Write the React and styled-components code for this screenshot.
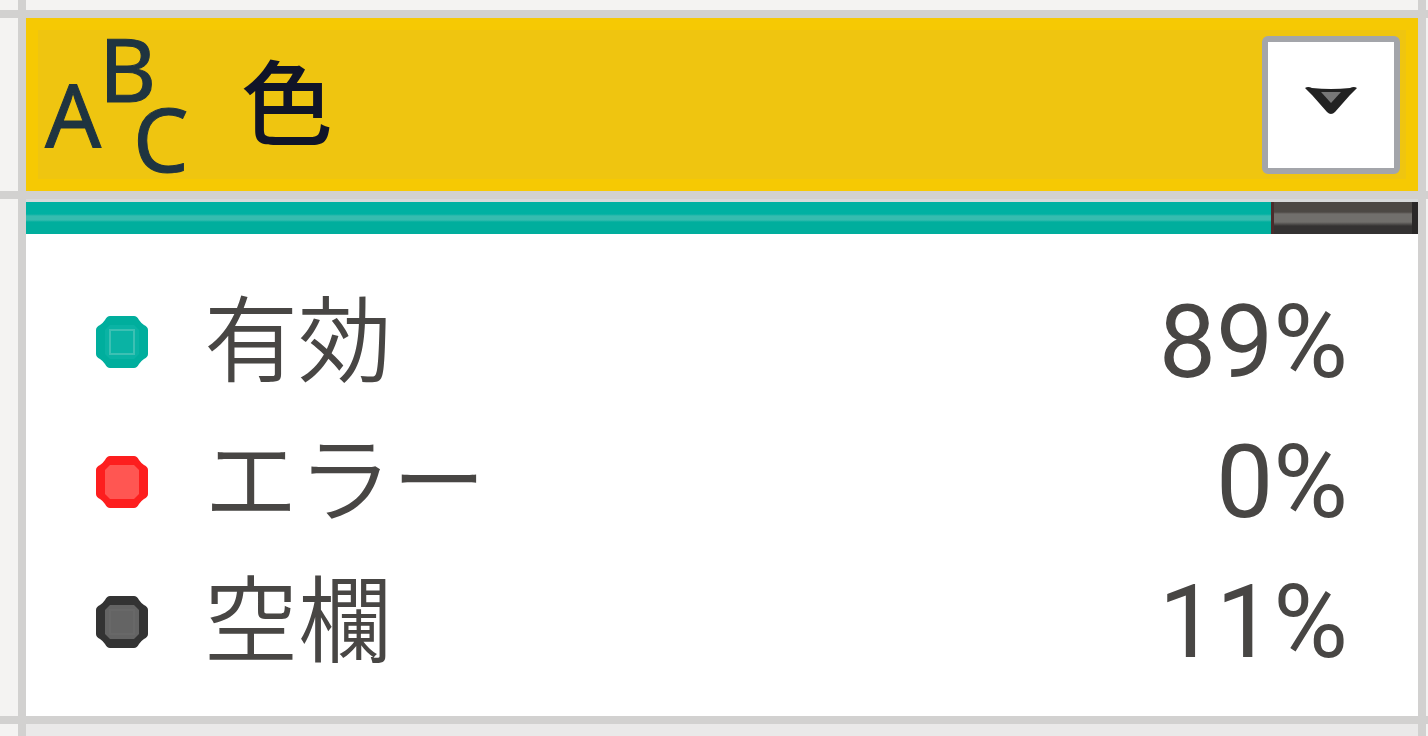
import React from "react";
import styled, { createGlobalStyle } from "styled-components";

const stats = [
  { id: "valid", label: "有効", count: 17, edge: "#00ae9d", core: "#0ab3a4", line: "#3cc0b3" },
  { id: "error", label: "エラー", count: 0, edge: "#fd1e1e", core: "#ff5652", line: "#ff5652" },
  { id: "empty", label: "空欄", count: 2, edge: "#333333", core: "#646464", line: "#686868" },
];

const total = stats.reduce((sum, s) => sum + s.count, 0);

const TextTypeIcon = () => (
  <TypeIcon viewBox="0 0 144 144" role="img" aria-label="ABC">
    <text x="0 54 88" y="114 69 139">ABC</text>
  </TypeIcon>
);

const Dot = ({ edge, core, line }) => (
  <DotIcon viewBox="0 0 52 52" aria-hidden="true">
    <path
      d="M14 0H38Q41 0 43 4Q45 7 48 9Q52 11 52 14V38Q52 41 48 43Q45 45 43 48Q41 52 38 52H14Q11 52 9 48Q7 45 4 43Q0 41 0 38V14Q0 11 4 9Q7 7 9 4Q11 0 14 0Z"
      fill={edge}
    />
    <path d="M14 9H38L43 14V38L38 43H14L9 38V14Z" fill={core} />
    <rect x="14" y="14" width="24" height="24" fill="none" stroke={line} strokeWidth="2" />
  </DotIcon>
);

const App = () => {
  return (
    <>
      <GlobalStyle />
      <Sheet>
        <Gutter />
        <Gutter />
        <Gutter />

        <Gutter />
        <Header>
          <TextTypeIcon />
          <Title>色</Title>
          <MenuButton type="button" aria-label="フィルター">
            <Arrow viewBox="0 0 54 30" aria-hidden="true">
              <path d="M1 2Q4 0 8 2Q27 4 46 2Q50 0 53 2L46 9L31 26Q27 30 23 26L8 9Z" fill="#222" />
              <path d="M17 6H37L27 17Z" fill="#777" />
            </Arrow>
          </MenuButton>
        </Header>
        <Gutter />

        <Gutter />
        <Quality>
          <Bar>
            <ValidPart style={{ flexGrow: stats[0].count }} />
            <EmptyPart style={{ flexGrow: stats[2].count }} />
          </Bar>
          <StatList>
            {stats.map((s) => (
              <StatRow key={s.id}>
                <Label>
                  <Dot edge={s.edge} core={s.core} line={s.line} />
                  <LabelText>{s.label}</LabelText>
                </Label>
                <Value>{Math.round((s.count / total) * 100)}%</Value>
              </StatRow>
            ))}
          </StatList>
        </Quality>
        <Gutter />

        <Gutter />
        <NextRow />
        <Gutter />
      </Sheet>
    </>
  );
};

export default App;

const GlobalStyle = createGlobalStyle`
  * {
    box-sizing: border-box;
  }

  body {
    margin: 0;
    background: #d2d1d0;
    font-family: "Noto Sans CJK JP", sans-serif;
  }
`;

const Sheet = styled.main`
  display: grid;
  grid-template-columns: 18px minmax(0, 1fr) 2px;
  grid-template-rows: 10px auto auto 1fr;
  gap: 8px;
  min-height: 100vh;
  background: #d2d1d0;
`;

const Gutter = styled.div`
  background: #f4f3f2;
`;

const Header = styled.header`
  display: flex;
  align-items: center;
  height: 173px;
  padding: 0 6px 0 7px;
  background: #efc510;
  border: 12px solid #f6c903;
`;

const TypeIcon = styled.svg`
  width: 144px;
  height: 144px;
  flex-shrink: 0;
  overflow: visible;
  font-family: "Noto Sans", sans-serif;
  font-size: 88px;
  fill: #1f3440;
  stroke: #1f3440;
`;

const Title = styled.h1`
  flex: 1;
  margin: 0 0 0 52px;
  padding-bottom: 14px;
  font-size: 92px;
  line-height: 132px;
  font-weight: 500;
  color: #101428;
`;

const MenuButton = styled.button`
  display: flex;
  align-items: center;
  justify-content: center;
  width: 138px;
  height: 138px;
  padding: 0 0 8px;
  background: #fff;
  border: 6px solid #a3a5aa;
  border-radius: 6px;
  cursor: pointer;
`;

const Arrow = styled.svg`
  width: 54px;
  height: 30px;
`;

const Quality = styled.section`
  background: #fff;
  border-top: 3px solid #d8dadb;
`;

const Bar = styled.div`
  display: flex;
  height: 32px;
`;

const ValidPart = styled.div`
  flex-basis: 0;
  background: linear-gradient(#00b1a2 12px, #36bcaf 14px, #36bcaf 18px, #00ae9d 20px);
`;

const EmptyPart = styled.div`
  flex-basis: 0;
  background: linear-gradient(#4c4844 10px, #716f6c 12px, #716f6c 20px, #343232 24px);
  box-shadow: inset 3px 0 #4a2c2c, inset -6px 0 #2a2828;
`;

const StatList = styled.dl`
  margin: 0;
  padding: 38px 70px 24px;
`;

const StatRow = styled.div`
  display: flex;
  align-items: center;
  justify-content: space-between;
  height: 140px;
  color: #484644;
`;

const Label = styled.dt`
  display: flex;
  align-items: center;
  gap: 56px;
  font-size: 94px;
  line-height: 124px;
  font-weight: 350;
`;

const LabelText = styled.span`
  padding-bottom: 16px;
`;

const DotIcon = styled.svg`
  width: 52px;
  height: 52px;
`;

const Value = styled.dd`
  margin: 0;
  font-family: Roboto, sans-serif;
  font-size: 102px;
  line-height: 140px;
`;

const NextRow = styled.div`
  background: #eae9e9;
`;
